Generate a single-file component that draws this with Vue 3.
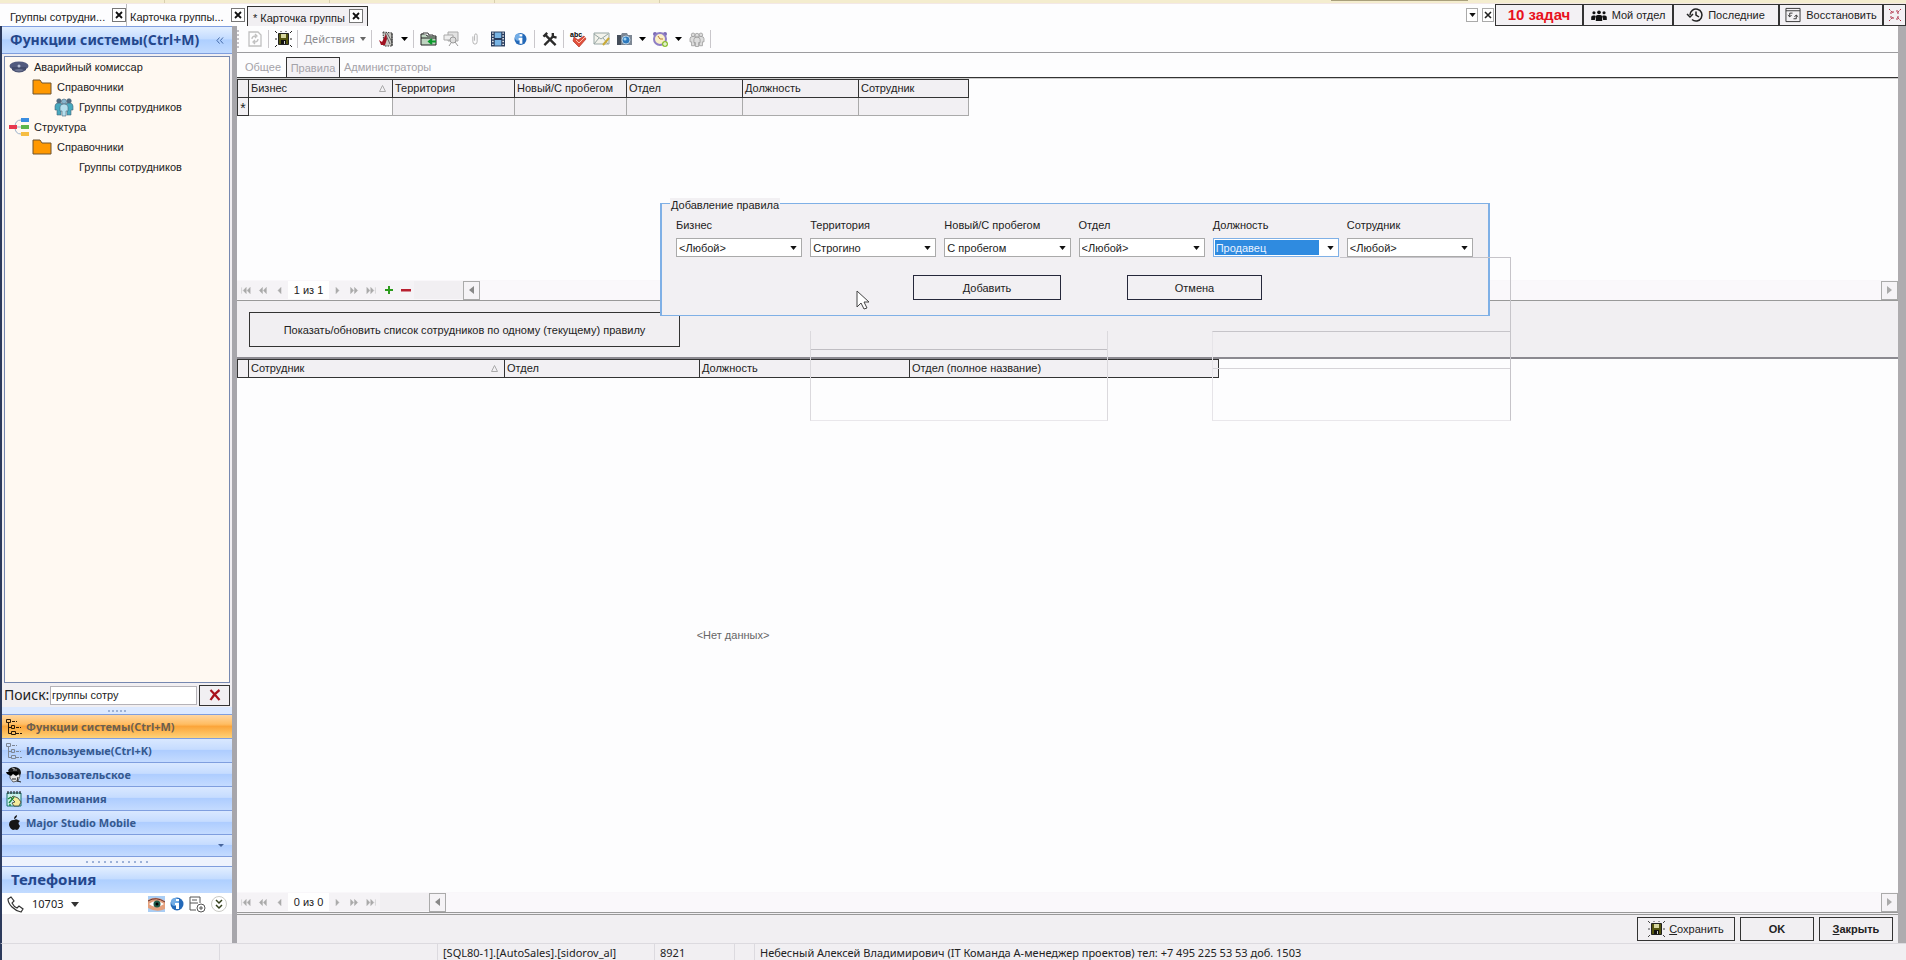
<script setup>
import { ref } from 'vue'

const docTabs = [
  { title: 'Группы сотрудни...', cls: 'first' },
  { title: 'Карточка группы...', cls: 'second' },
  { title: '* Карточка группы', cls: 'active' }
]
const navItems = [
  { label: 'Функции системы(Ctrl+M)', icon: 'tree', active: true },
  { label: 'Используемые(Ctrl+K)', icon: 'treeLight' },
  { label: 'Пользовательское', icon: 'face' },
  { label: 'Напоминания', icon: 'note' },
  { label: 'Major Studio Mobile', icon: 'apple' }
]
const ruleColumns = ['Бизнес', 'Территория', 'Новый/С пробегом', 'Отдел', 'Должность', 'Сотрудник']
const staffColumns = ['Сотрудник', 'Отдел', 'Должность', 'Отдел (полное название)']
const fields = [
  { id: 'business', label: 'Бизнес', value: '<Любой>' },
  { id: 'territory', label: 'Территория', value: 'Строгино' },
  { id: 'condition', label: 'Новый/С пробегом', value: 'С пробегом' },
  { id: 'department', label: 'Отдел', value: '<Любой>' },
  { id: 'position', label: 'Должность', value: 'Продавец', focused: true },
  { id: 'employee', label: 'Сотрудник', value: '<Любой>' }
]
const pagers = [
  { name: 'Первая', d: 'M2 3v8M8 3 4 7l4 4zM13 3 9 7l4 4z' },
  { name: 'Назад на страницу', d: 'M7 3 3 7l4 4zM12 3 8 7l4 4z' },
  { name: 'Назад', d: 'M9 3 5 7l4 4z' }
]
const pagersNext = [
  { name: 'Вперёд', d: 'M5 3 9 7l-4 4z' },
  { name: 'Вперёд на страницу', d: 'M2 3l4 4-4 4zM7 3l4 4-4 4z' },
  { name: 'Последняя', d: 'M1 3l4 4-4 4zM6 3l4 4-4 4zM12 3v8' }
]
const query = ref('группы сотру')
</script>

<template>
  <div class="app">
    <div class="topstrip"><i></i><i></i><i></i><i></i><b></b></div>

    <header class="tabrow">
      <div v-for="t in docTabs" :key="t.title" class="doctab" :class="t.cls">
        <span>{{ t.title }}</span>
        <button class="xbtn" aria-label="Закрыть вкладку">
          <svg width="8" height="8" viewBox="0 0 8 8"><path d="M1 1l6 6M7 1 1 7" stroke="#111" stroke-width="1.8" /></svg>
        </button>
      </div>
      <div class="spacer"></div>
      <button class="mini" aria-label="Список вкладок"><svg width="7" height="4" viewBox="0 0 8 5"><path d="M0 0h8L4 5z" fill="#111" /></svg></button>
      <button class="mini" aria-label="Закрыть"><svg width="8" height="8" viewBox="0 0 8 8"><path d="M1 1l6 6M7 1 1 7" stroke="#222" stroke-width="1.6" /></svg></button>
      <div class="topbuttons">
        <button class="tasks">10 задач</button>
        <button class="dept">
          <svg width="16" height="11" viewBox="0 0 17 12" fill="#111"><circle cx="3" cy="3" r="1.7" /><circle cx="8.500" cy="2.500" r="2" /><circle cx="14" cy="3" r="1.700" /><path d="M0 11V8q0-2 2-2h2q1 0 1 1-1 1-1 4zM17 11V8q0-2-2-2h-2q-1 0-1 1 1 1 1 4zM5 12V8q0-2.500 2-2.500h3q2 0 2 2.500v4z" /></svg>
          Мой отдел
        </button>
        <button class="recent">
          <svg width="16" height="16" viewBox="0 0 16 16" fill="none" stroke="#222" stroke-width="1.500"><path d="M3 8a6 6 0 1 1 2 4.500M0 7l3 3 3-3M9 4.500V8l3 2" /></svg>
          Последние
        </button>
        <button class="restore">
          <svg width="16" height="16" viewBox="0 0 17 16" fill="none" stroke="#333"><path d="M1 1h15v14H1zM1 3.500h15" /><path d="M8 6H5v4M3 8l2 2 2-2M9 12h3V8M10 10l2-2 2 2" /></svg>
          Восстановить
        </button>
        <button class="shrink" aria-label="Свернуть">
          <svg width="12" height="12" viewBox="0 0 12 12" fill="none" stroke="#b03048"><path d="M0 0l4 4M1 4h3V1M12 0 8 4M8 1v3h3M0 12l4-4M1 8h3v3M12 12 8 8M8 11V8h3" stroke-dasharray="2 1" /></svg>
        </button>
      </div>
    </header>

    <div class="body">
      <aside class="sidebar">
        <div class="sidehead"><h2>Функции системы(Ctrl+M)</h2><button aria-label="Свернуть панель">
          <svg width="8" height="7" viewBox="0 0 9 8" fill="none" stroke="#345a9c"><path d="M4 0.500 1 4l3 3.500M8 0.500 5 4l3 3.500" /></svg></button></div>
        <div class="tree">
          <div class="node">
            <svg width="20" height="14" viewBox="0 0 20 14"><ellipse cx="10" cy="6" rx="9.500" ry="4.500" fill="#525a7e" /><path d="M3 7h14v3q-7 5-14 0z" fill="#434b6c" /><path d="M5 10q5-2 10 0-5 3-10 0z" fill="#6c7492" /><circle cx="10" cy="6" r="1.500" fill="#b8c0d4" /></svg>
            Аварийный комиссар</div>
          <div class="node l1">
            <svg width="20" height="16" viewBox="0 0 20 16"><path d="M1 1h7l2 3h9v11H1z" fill="#ff9800" stroke="#6f5430" /></svg>
            Справочники</div>
          <div class="node l2">
            <svg width="18" height="18" viewBox="0 0 18 18"><g stroke="#47647a" stroke-width="0.600"><circle cx="4" cy="3" r="2.300" fill="#526b80" /><circle cx="14" cy="3" r="2.300" fill="#526b80" /><path d="M0 8q0-3 4-3t4 3v4H6v5H2v-5H0zM10 8q0-3 4-3t4 3v4h-2v5h-4v-5h-2z" fill="#48a9be" /><circle cx="9" cy="3.500" r="2.500" fill="#87b6ce" /><path d="M5 9q0-3 4-3t4 3v4h-2v5H7v-5H5z" fill="#b5dfed" /></g></svg>
            Группы сотрудников</div>
          <div class="node">
            <svg width="20" height="18" viewBox="0 0 20 18"><path d="M6 9h6M6 9q0-7 6-7M6 9q0 7 6 7" fill="none" stroke="#9db3cc" /><path fill="#e8384f" d="M0 7h8v4H0z" /><path fill="#3a8de0" d="M12 0h8v4h-8z" /><path fill="#5db54b" d="M12 7h8v4h-8z" /><path fill="#f6bd42" d="M12 14h8v4h-8z" /></svg>
            Структура</div>
          <div class="node l1">
            <svg width="20" height="16" viewBox="0 0 20 16"><path d="M1 1h7l2 3h9v11H1z" fill="#ff9800" stroke="#6f5430" /></svg>
            Справочники</div>
          <div class="node l3">Группы сотрудников</div>
        </div>
        <div class="search">
          <label for="search">Поиск:</label>
          <input id="search" v-model="query" type="text" />
          <button aria-label="Очистить"><svg width="12" height="12" viewBox="0 0 12 12"><path d="M1.500 1q4 4 9 10M10.500 1Q5 5 1.500 11" stroke="#a8101c" stroke-width="2.200" fill="none" /></svg></button>
        </div>
        <div class="split dots5"><i v-for="n in 5" :key="n"></i></div>
        <nav class="sidenav">
          <button v-for="n in navItems" :key="n.label" :class="{ active: n.active }">
            <svg width="16" height="16" viewBox="0 0 16 16">
              <g v-if="n.icon === 'tree' || n.icon === 'treeLight'" :stroke="n.icon === 'tree' ? '#2b1a08' : '#7d8695'" fill="none"><path d="M0.500 0.500h4v3h-4zM2.500 4v10.500H5M2.500 8.500H5M5.500 6.500h3v3h-3zM5.500 12.500h4v3h-4z" /><path d="M6 2.500h5M10 8.500h5M10 14.500h6" stroke-dasharray="3 1" /></g>
              <g v-else-if="n.icon === 'face'"><path d="M2 4q1-4 7-4 6 1 6 6l-1 3-3-3H4z" fill="#181818" /><path d="M4 6h8l2 3-2 5-5 1-3-4z" fill="#e4e4e4" stroke="#333" stroke-width="0.700" /><path d="M0 5h12l1 2-3 2-3-2-2 2-4-2z" fill="#000" /><path d="M6 1l3 1M7 3h4" stroke="#ddd" stroke-width="0.700" /><path d="M6 12h4M12 10l-1 4 4 1" stroke="#222" fill="none" /></g>
              <g v-else-if="n.icon === 'note'"><path d="M1 2h14v13H1z" fill="#c9f0ea" stroke="#19716d" /><path d="M2 0v3M5 0v3M8 0v3M11 0v3M14 0v3" stroke="#111" /><path d="M7 5l5 2 3 4-2 4H8l-2-3 3-1-4-4z" fill="#f4ec9c" stroke="#222" stroke-width="0.700" /><path d="M3 12 8 6M2 8l3-2M3 14h2" stroke="#1c8a40" stroke-width="1.500" /></g>
              <g v-else fill="#151515"><path d="M8 5q2-1.500 4 0l2 1q-3 2 0 5-1 3-3 4-2-1-4 0-3-1-4-5 0-5 5-5zM8 4q0-3 3-4 0 3-3 4z" /></g>
            </svg>
            {{ n.label }}
          </button>
          <div class="overflow"><svg width="6" height="3" viewBox="0 0 6 3"><path d="M0 0h6L3 3z" fill="#47659c" /></svg></div>
        </nav>
        <div class="split dots11"><i v-for="n in 11" :key="n"></i></div>
        <h2 class="phonehead">Телефония</h2>
        <div class="phonerow">
          <svg width="17" height="17" viewBox="0 0 17 17" fill="none" stroke="#333" stroke-width="1.200"><path d="M4 1 1 3q0 4 4 8t9 5l2-3-4-3-2 2q-3-1-5-5l2-2z" /></svg>
          <span>10703</span>
          <svg width="8" height="5" viewBox="0 0 8 5"><path d="M0 0h8L4 5z" fill="#333" /></svg>
          <div class="spacer"></div>
          <svg width="17" height="16" viewBox="0 0 17 16"><path fill="#a9cdf4" d="M0 0h17v16H0z" /><path d="M0 4q8-5 17 1v8q-8 4-17-1z" fill="#e4a07c" /><path d="M1 8q7-6 15 0-8 6-15 0z" fill="#fff" /><circle cx="9" cy="8" r="3.500" fill="#1f5a48" /><circle cx="9" cy="8" r="1.500" /><path d="M0 5q8-5 17 1" stroke="#633" fill="none" /></svg>
          <svg width="14" height="14" viewBox="0 0 14 14"><circle cx="7" cy="7" r="6.500" fill="#2469b8" /><circle cx="5" cy="5" r="4" fill="#73ade6" /><path d="M6 2h3v2H6zM5 6h4v6H6V8H5z" fill="#fff" /></svg>
          <svg width="17" height="17" viewBox="0 0 17 17" fill="none" stroke="#555"><path d="M11 7V1H1v13h6M3 4h5M1 7h8" /><circle cx="12" cy="12" r="4" /><path d="M10 12h4M12 10v4" /></svg>
          <svg width="16" height="16" viewBox="0 0 16 16" fill="none"><circle cx="8" cy="8" r="7.500" stroke="#c9c9c4" /><path d="M5 4l3 3 3-3M5 9l3 3 3-3" stroke="#34401c" stroke-width="1.500" /></svg>
        </div>
      </aside>

      <main class="main">
        <div class="toolbar">
          <span class="grip"></span>
          <button class="tb" aria-label="Обновить"><svg width="14" height="16" viewBox="0 0 14 16" fill="none" stroke="#c0c0c0"><path d="M1 1h9l3 3v11H1zM4 8q0-3 4-3M7 3l2 2-2 2M10 8q0 3-4 3M7 9l-2 2 2 2" stroke-width="1.300" /></svg></button>
          <span class="sep"></span>
          <button class="tb" aria-label="Сохранить"><svg width="17" height="16" viewBox="0 0 17 16"><path d="M0 0l2 2M6 0v1M11 0v1M17 0l-2 2M0 8h2M15 8h2M0 16l2-2M17 16l-2-2" stroke="#222" /><path d="M3.500 2.500h10v11h-10z" fill="#55550f" stroke="#222" /><path d="M6 3h5v4H6z" fill="#d7d7a0" /><path d="M6 9h5v4H6z" fill="#111" /><path d="M9 10h1v3H9z" fill="#ccc" /></svg></button>
          <span class="sep"></span>
          <button class="actions">Действия <svg width="6" height="4" viewBox="0 0 6 4"><path d="M0 0h6L3 4z" fill="#666" /></svg></button>
          <span class="sep"></span>
          <button class="tb" aria-label="Выход"><svg width="16" height="16" viewBox="0 0 16 16"><path d="M4 1l9 1v13H5z" fill="#c9c9c4" stroke="#333" stroke-dasharray="1.500 1" /><path d="M6 2l5 11M8 2l5 9" stroke="#666" /><path d="M13 2v13" stroke="#333" /><path d="M0 9l3 2 4-8 1 5-2 6H2z" fill="#a01020" /></svg></button>
          <button class="arr" aria-label="Выход: меню"><svg width="7" height="4" viewBox="0 0 7 4"><path d="M0 0h7L3.500 4z" /></svg></button>
          <span class="sep"></span>
          <button class="tb" aria-label="Папка"><svg width="17" height="14" viewBox="0 0 17 14"><path d="M1 2h5l1 2h9v9H1z" fill="#bed4c0" stroke="#222" /><path d="M3 2V1h5l1 2h4v1" fill="#fff" stroke="#333" /><path d="M1 6h15" fill="none" stroke="#222" /><path d="M16 9.500H9M12 7l-3 2.500 3 2.500" stroke="#0b9a2c" stroke-width="2" fill="none" /></svg></button>
          <button class="tb" aria-label="Просмотр"><svg width="17" height="16" viewBox="0 0 17 16"><path d="M5 1h10v9H5z" fill="#e2e2e2" stroke="#aaa" /><path d="M1 4h9v5H1z" fill="#eee" stroke="#aaa" /><circle cx="10" cy="9" r="3" fill="#ddd" stroke="#999" /><path d="M12 11l3 4M8 12l-2 3" stroke="#999" /></svg></button>
          <button class="tb" aria-label="Вложение"><svg width="6" height="12" viewBox="0 0 7 14" fill="none" stroke="#aaa"><path d="M1 4v6q0 3 2.500 3T6 10V3q0-2-1.500-2T3 3v6" /></svg></button>
          <button class="tb" aria-label="Видео"><svg width="14" height="16" viewBox="0 0 15 16"><path fill="#283c5e" d="M0 0h15v16H0z" /><path fill="#78b4e4" d="M4 1h7v6H4zM4 9h7v6H4z" /><path d="M2 1v15M13 1v15" stroke="#fff" stroke-width="1.500" stroke-dasharray="1.500 1.500" /></svg></button>
          <button class="tb" aria-label="Справка"><svg width="13" height="14" viewBox="0 0 14 14"><circle cx="7" cy="7" r="6.500" fill="#2469b8" /><circle cx="5" cy="5" r="4" fill="#73ade6" /><path d="M6 2h3v2H6zM5 6h4v6H6V8H5z" fill="#fff" /></svg></button>
          <span class="sep"></span>
          <button class="tb" aria-label="Инструменты"><svg width="16" height="15" viewBox="0 0 16 16" fill="none" stroke="#2b2b2b"><path d="M3 3l11 11" stroke-width="2.500" /><path d="M12 4 2 14" stroke-width="2.500" /><path d="M1 5l4-4M11 1v4l4 1" stroke-width="2.500" /></svg></button>
          <span class="sep"></span>
          <button class="tb" aria-label="Орфография"><svg width="17" height="16" viewBox="0 0 17 16"><path d="M4 6l4 3 6-4 2 3-7 8-6-6z" fill="#e0513d" stroke="#b63426" stroke-width="0.700" /><path d="M6 9l3 3 6-6" stroke="#ffc1ae" fill="none" /><text x="0" y="6" font-size="7" font-weight="700" font-family="Liberation Sans, sans-serif">abc</text></svg></button>
          <button class="tb" aria-label="Письмо"><svg width="17" height="14" viewBox="0 0 17 14"><path d="M1 1h15v11H1z" fill="#f3f3ec" stroke="#97a6a4" /><path d="M1 2l7 5 7-5M1 12l5-6M15 12l-5-6" stroke="#97a6a4" fill="none" /><path d="M10 13l6-7" stroke="#c9aa38" stroke-width="2" /></svg></button>
          <button class="tb" aria-label="Снимок"><svg width="17" height="14" viewBox="0 0 17 14"><path d="M1 3h4l1-2h5l1 2h4v10H1z" fill="#7d8794" /><path d="M1 3h4v10H1z" fill="#454e5b" /><circle cx="10" cy="8" r="4" fill="#2d79bd" stroke="#b7d0e4" /><circle cx="9" cy="7" r="1.500" fill="#9cd3f5" /></svg></button>
          <button class="arr" aria-label="Снимок: меню"><svg width="7" height="4" viewBox="0 0 7 4"><path d="M0 0h7L3.500 4z" /></svg></button>
          <button class="tb" aria-label="Напоминание"><svg width="17" height="16" viewBox="0 0 17 16"><circle cx="3" cy="3" r="2" fill="#7a68b4" /><circle cx="13" cy="3" r="2" fill="#7a68b4" /><circle cx="8" cy="8" r="6" fill="#faf0c7" stroke="#8f7fc4" stroke-width="2" /><path d="M6 5l2 3h3" stroke="#bc7a35" fill="none" /><circle cx="13" cy="13" r="3" fill="#8cc034" /><path d="M11 13h4M13 11v4" stroke="#fff" /></svg></button>
          <button class="arr" aria-label="Напоминание: меню"><svg width="7" height="4" viewBox="0 0 7 4"><path d="M0 0h7L3.500 4z" /></svg></button>
          <button class="tb" aria-label="Группа"><svg width="14" height="15" viewBox="0 0 18 18"><g fill="#ddd" stroke="#999"><circle cx="4" cy="3" r="2.300" /><circle cx="14" cy="3" r="2.300" /><path d="M0 8q0-3 4-3t4 3v4H6v5H2v-5H0zM10 8q0-3 4-3t4 3v4h-2v5h-4v-5h-2z" /><circle cx="9" cy="3.500" r="2.500" /><path d="M5 9q0-3 4-3t4 3v4h-2v5H7v-5H5z" /></g></svg></button>
          <span class="sep"></span>
        </div>

        <div class="subtabs">
          <button>Общее</button>
          <button class="on">Правила</button>
          <button>Администраторы</button>
        </div>

        <section class="rules">
          <table class="grid rulesgrid">
            <colgroup><col class="ind" /><col class="r1" /><col class="r2" /><col class="r3" /><col class="r4" /><col class="r4" /><col class="r6" /></colgroup>
            <thead><tr><th></th><th v-for="(c, i) in ruleColumns" :key="c">{{ c }}<svg v-if="i === 0" class="sort" width="7" height="7" viewBox="0 0 7 7"><path d="M3.500 0.500 0.500 6.500h6z" fill="none" stroke="#aaa" /></svg></th></tr></thead>
            <tbody><tr><td class="mark">*</td><td class="edit"></td><td v-for="n in 5" :key="n"></td></tr></tbody>
          </table>
          <div class="spacer"></div>
          <div class="pager">
            <button v-for="p in pagers" :key="p.name" :aria-label="p.name"><svg width="11" height="11" viewBox="0 0 14 14"><path :d="p.d" fill="#aaa" stroke="#aaa" stroke-width="0.500" /></svg></button>
            <span class="count">1 из 1</span>
            <button v-for="p in pagersNext" :key="p.name" :aria-label="p.name"><svg width="11" height="11" viewBox="0 0 14 14"><path :d="p.d" fill="#aaa" stroke="#aaa" stroke-width="0.500" /></svg></button>
            <button aria-label="Добавить строку"><svg width="8" height="8" viewBox="0 0 9 9"><path d="M0 4.500h9M4.500 0v9" stroke="#2b9b1c" stroke-width="2.200" /></svg></button>
            <button aria-label="Удалить строку"><svg width="10" height="3" viewBox="0 0 10 3"><path d="M0 0h10v2.500H0z" fill="#b82030" /></svg></button>
            <span class="fill"></span>
            <button class="scroll" aria-label="Прокрутить влево"><svg width="5" height="8" viewBox="0 0 5 8"><path d="M5 0v8L0 4z" fill="#888" /></svg></button>
            <span class="track"></span>
            <button class="scroll" aria-label="Прокрутить вправо"><svg width="5" height="8" viewBox="0 0 5 8"><path d="M0 0v8l5-4z" fill="#aaa" /></svg></button>
          </div>
        </section>

        <section class="showbar"><button>Показать/обновить список сотрудников по одному (текущему) правилу</button></section>

        <section class="staff">
          <table class="grid staffgrid">
            <colgroup><col class="ind" /><col class="s1" /><col class="s2" /><col class="s3" /><col class="s4" /></colgroup>
            <thead><tr><th></th><th v-for="(c, i) in staffColumns" :key="c">{{ c }}<svg v-if="i === 0" class="sort" width="7" height="7" viewBox="0 0 7 7"><path d="M3.500 0.500 0.500 6.500h6z" fill="none" stroke="#aaa" /></svg></th></tr></thead>
          </table>
          <div class="empty">&lt;Нет данных&gt;</div>
          <div class="pager">
            <button v-for="p in pagers" :key="p.name" :aria-label="p.name"><svg width="11" height="11" viewBox="0 0 14 14"><path :d="p.d" fill="#aaa" stroke="#aaa" stroke-width="0.500" /></svg></button>
            <span class="count">0 из 0</span>
            <button v-for="p in pagersNext" :key="p.name" :aria-label="p.name"><svg width="11" height="11" viewBox="0 0 14 14"><path :d="p.d" fill="#aaa" stroke="#aaa" stroke-width="0.500" /></svg></button>
            <span class="fill"></span>
            <button class="scroll" aria-label="Прокрутить влево"><svg width="5" height="8" viewBox="0 0 5 8"><path d="M5 0v8L0 4z" fill="#888" /></svg></button>
            <span class="track"></span>
            <button class="scroll" aria-label="Прокрутить вправо"><svg width="5" height="8" viewBox="0 0 5 8"><path d="M0 0v8l5-4z" fill="#aaa" /></svg></button>
          </div>
        </section>

        <footer class="actionsbar">
          <button class="save"><svg width="17" height="16" viewBox="0 0 17 16"><path d="M0 0l2 2M6 0v1M11 0v1M17 0l-2 2M0 8h2M15 8h2M0 16l2-2M17 16l-2-2" stroke="#444" /><path d="M3.500 2.500h10v11h-10z" fill="#55550f" stroke="#222" /><path d="M6 3h5v4H6z" fill="#d7d7a0" /><path d="M6 9h5v4H6z" fill="#111" /><path d="M9 10h1v3H9z" fill="#ccc" /></svg><span><u>С</u>охранить</span></button>
          <button class="bold">OK</button>
          <button class="bold"><span><u>З</u>акрыть</span></button>
        </footer>

        <div class="ghost g1"></div>
        <div class="ghost g2"></div>

        <form class="dialog" @submit.prevent>
          <div class="legend">Добавление правила</div>
          <div class="fields">
            <div v-for="f in fields" :key="f.id" class="field" :class="{ focused: f.focused }">
              <label :for="f.id">{{ f.label }}</label>
              <div class="combo">
                <select :id="f.id"><option>{{ f.value }}</option></select>
                <svg width="7" height="4" viewBox="0 0 8 5"><path d="M0 0h8L4 5z" fill="#111" /></svg>
              </div>
            </div>
          </div>
          <div class="dlgbuttons"><button class="add">Добавить</button><button class="cancel">Отмена</button></div>
        </form>
        <div class="ghost g3"></div>
        <svg class="cursor" width="14" height="20" viewBox="0 0 14 20"><path d="M1 1v16l4-4 3 6 3-1-3-6h5z" fill="#fff" stroke="#444" /></svg>
      </main>
      <div class="edge"></div>
    </div>

    <div class="status">
      <span class="c1"></span><span class="c1"></span><span class="c3">[SQL80-1].[AutoSales].[sidorov_al]</span><span class="c4">8921</span><span class="c5"></span><span class="c6">Небесный Алексей Владимирович (IT Команда А-менеджер проектов) тел: +7 495 225 53 53 доб. 1503</span>
    </div>
  </div>
</template>

<style>
body { margin: 0; background: #fdfdfe; }
</style>

<style scoped>
.app { height: 100vh; min-height: 700px; display: flex; flex-direction: column; overflow: hidden; font: 11px/14px "Liberation Sans", Arial, sans-serif; color: #222; background: #fdfdfe; }
.app * { box-sizing: border-box; }
button { font: inherit; color: inherit; background: none; border: 0; padding: 0; margin: 0; display: flex; align-items: center; justify-content: center; white-space: nowrap; }
svg { flex: none; display: block; overflow: visible; }
.spacer { flex: 1; }
.topstrip { height: 4px; flex: none; display: flex; background: #f4edcf; border-bottom: 1px solid #f3e8e6; }
.topstrip i { width: 165px; border-right: 1px solid #d8cfae; }
.topstrip b { width: 137px; height: 1px; background: #a9a07c; margin-left: 671px; }

.tabrow { height: 22px; flex: none; display: flex; align-items: stretch; }
.doctab { display: flex; align-items: center; justify-content: space-between; white-space: nowrap; }
.doctab span { padding-top: 4px; }
.doctab.first { width: 127px; padding-left: 10px; border-right: 1px solid #bbb; }
.doctab.second { width: 120px; padding: 0 2px 0 3px; }
.doctab.active { width: 121px; margin-top: 2px; padding: 0 4px 0 5px; background: #f1eff2; border: 1px solid #333; border-bottom: 0; }
.doctab.active span { padding-top: 2px; }
.xbtn { width: 14px; height: 14px; border: 1px solid #777; background: #fff; }
.doctab.active .xbtn { margin-bottom: 1px; }
.mini { width: 12px; height: 14px; margin: 4px 4px 0 0; border: 1px solid #aaa; background: #fff; }
.mini + .topbuttons { margin-left: -3px; }
.topbuttons { display: flex; }
.topbuttons button { border: 1px solid #333; background: #f3f1f4; gap: 5px; }
.topbuttons .tasks { width: 88px; color: #e8121c; font-size: 15px; font-weight: 700; }
.topbuttons .dept { width: 90px; }
.topbuttons .recent { width: 106px; }
.topbuttons .restore { width: 104px; }
.topbuttons .shrink { width: 23px; }

.body { flex: 1; min-height: 0; display: flex; }
.edge { width: 8px; flex: none; background: #aeacaf; }

.sidebar { width: 237px; flex: none; display: flex; flex-direction: column; border-left: 2px solid #2c3a5c; border-right: 5px solid #a7a6ab; background: #f1eff2; }
.sidehead { height: 28px; flex: none; display: flex; align-items: center; justify-content: space-between; padding: 0 8px; background: linear-gradient(#e3efff, #c4dcff 45%, #aecfff 50%, #c2dbff); border: 1px solid #7f9ede; border-width: 1px 0; }
h2 { margin: 0; font: 700 14px/20px "Noto Sans", sans-serif; color: #24478c; white-space: nowrap; }
.tree { flex: 1; min-height: 0; margin: 2px 2px 0 2px; border: 1px solid #7688b0; background: #fff9f2; }
.node { height: 20px; display: flex; align-items: center; gap: 5px; padding-left: 4px; white-space: nowrap; }
.node.l1 { padding-left: 27px; }
.node.l2 { padding-left: 50px; gap: 6px; }
.node.l3 { padding-left: 74px; }
.search { height: 24px; flex: none; display: flex; align-items: center; padding: 0 2px; gap: 2px; }
.search label { width: 44px; font: 14px/20px "Noto Sans", sans-serif; }
.search input { flex: 1; min-width: 0; height: 19px; border: 1px solid #b5b3b8; background: #fff; font: inherit; color: #222; padding: 0 1px; }
.search button { width: 31px; height: 21px; border: 1px solid #333; }
.split { flex: none; height: 8px; display: flex; justify-content: center; align-items: center; gap: 2px; background: #dce9ff; }
.split i { width: 2px; height: 2px; background: #9db2d8; }
.dots11 { height: 9px; gap: 4px; background: #eef3fd; }
.dots5 { border-bottom: 1px solid #7f9ede; }
.sidenav { flex: none; }
.sidenav button, .overflow { width: 100%; height: 24px; border-bottom: 1px solid #7f9ede; background: linear-gradient(#d9e8ff, #c6dcff 45%, #aecdff 50%, #c4dbff); }
.sidenav button { justify-content: flex-start; padding-left: 4px; gap: 4px; font: 700 11px/16px "Noto Sans", sans-serif; color: #35598f; }
.sidenav button.active { background: linear-gradient(#ffd6a0, #ffbd62 40%, #fba53a 50%, #ffd278); color: #6c6050; }
.sidenav .overflow { height: 22px; display: flex; align-items: center; justify-content: flex-end; padding-right: 8px; }
.phonehead { height: 27px; flex: none; font-size: 15px; line-height: 25px; padding-left: 9px; background: linear-gradient(#e3efff, #c4dcff 45%, #aecfff 50%, #c2dbff); border-top: 1px solid #7f9ede; }
.phonerow { height: 21px; flex: none; margin-bottom: 29px; padding: 1px 5px 0 5px; display: flex; align-items: center; gap: 5px; background: #fff; font: 11px/16px "Noto Sans", sans-serif; }
.phonerow span { padding: 0 3px; }

.main { flex: 1; min-width: 0; position: relative; display: flex; flex-direction: column; }
.toolbar { height: 27px; flex: none; display: flex; align-items: center; border-bottom: 1px solid #9c9c9f; }
.grip { width: 6px; height: 18px; border-left: 2px dotted #c5c3c8; }
.tb { width: 23px; height: 20px; }
.arr { width: 13px; height: 20px; }
.sep { width: 6px; height: 18px; background: linear-gradient(90deg, transparent 2px, #c9c7cb 2px, #c9c7cb 3px, transparent 3px); }
.actions { width: 68px; gap: 5px; font: 11px/16px "Noto Sans", sans-serif; color: #8c8c90; }
.subtabs { height: 25px; flex: none; display: flex; align-items: flex-end; padding-left: 8px; border-bottom: 1px solid #333; color: #a4a2a8; }
.subtabs button { height: 20px; }
.subtabs button:first-child { width: 41px; justify-content: flex-start; }
.subtabs .on { width: 54px; border: 1px solid #333; border-bottom: 0; background: #f3f1f4; }
.subtabs button:last-child { padding-left: 4px; }

.rules { flex: 0 0 222px; display: flex; flex-direction: column; border-top: 1px solid #ccc; }
.grid { table-layout: fixed; border-collapse: collapse; }
.rulesgrid { width: 731px; }
.staffgrid { width: 981px; }
.ind { width: 11px; } .r1 { width: 144px; } .r2 { width: 122px; } .r3 { width: 112px; } .r4 { width: 116px; } .r6 { width: 110px; }
.s1 { width: 256px; } .s2 { width: 195px; } .s3 { width: 210px; } .s4 { width: 309px; }
.grid th { height: 18px; padding: 0 2px; border: 1px solid #333; background: #f2f0f3; font-weight: 400; text-align: left; line-height: 15px; white-space: nowrap; }
.grid .sort { float: right; margin: 4px 4px 0 0; }
.grid td { height: 18px; padding: 0; background: #f2f0f3; border: 1px solid #aaa; }
.grid td.mark { border: 1px solid #333; text-align: center; font-size: 14px; line-height: 12px; padding-top: 3px; overflow: hidden; }
.grid td.edit { background: #fff; }
.pager { height: 20px; flex: none; display: flex; align-items: center; background: #f9f7fa; }
.pager button { width: 17px; height: 18px; background: #f5f3f6; }
.pager .count { width: 41px; text-align: center; background: #fff; line-height: 18px; }
.pager .fill { width: 49px; height: 18px; background: #f1eff2; }
.pager .scroll { width: 17px; height: 19px; border: 1px solid #aaa; }
.pager .track { flex: 1; height: 19px; background: #faf8fb; }
.showbar { height: 57px; flex: none; display: flex; align-items: center; padding: 1px 0 0 12px; border-top: 1px solid #999; background: #f1eff2; }
.showbar button { width: 431px; height: 35px; border: 1px solid #333; }
.staff { flex: 1; min-height: 0; display: flex; flex-direction: column; border-top: 2px solid #8b8990; }
.empty { flex: 1; width: 992px; display: flex; align-items: center; justify-content: center; color: #666; }
.actionsbar { height: 31px; flex: none; display: flex; justify-content: flex-end; gap: 5px; padding: 2px 5px 2px 0; background: #f1eff2; border-top: 3px double #999; }
.actionsbar button { width: 74px; height: 24px; border: 1px solid #333; gap: 4px; }
.actionsbar .save { width: 98px; }
.bold { font-weight: 700; }

.dialog { position: absolute; left: 423px; top: 177px; width: 830px; height: 113px; background: #f2f0f3; border: 1px solid #7fb0e6; border-width: 1px 2px 1px 2px; }
.legend { position: absolute; left: 8px; top: -6px; padding: 0 1px; background: #f2f0f3; }
.fields { display: flex; gap: 8px; padding: 14px 15px 0 14px; }
.field { flex: 1; min-width: 0; }
.field label { display: block; height: 20px; line-height: 14px; }
.combo { display: grid; align-items: center; }
.combo select, .combo svg { grid-area: 1 / 1; }
.combo select { appearance: none; width: 100%; height: 19px; margin: 0; border: 1px solid #aaa; border-radius: 0; background: #fff; font: inherit; color: #222; padding: 0 18px 0 2px; }
.combo svg { justify-self: end; margin-right: 5px; pointer-events: none; }
.focused select { border-color: #7fb0e6; color: #e8f2ff; background: linear-gradient(#2f8be0, #2f8be0) 1px 1px / calc(100% - 20px) calc(100% - 2px) no-repeat #fff; }
.dlgbuttons { display: flex; gap: 66px; padding: 18px 0 0 251px; }
.dlgbuttons button { height: 25px; border: 1px solid #26283a; }
.add { width: 148px; }
.cancel { width: 135px; }

.ghost { position: absolute; pointer-events: none; border: 1px solid #dbd9dd; }
.g1 { left: 573px; top: 305px; width: 298px; height: 90px; border-top: 0; border-bottom-color: #e9e7eb; background: linear-gradient(#c0bec3, #c0bec3) 0 18px / 100% 1px no-repeat; }
.g2 { left: 975px; top: 305px; width: 299px; height: 90px; border-color: #c6c4c9; border-bottom-color: #e9e7eb; border-left-color: #e6e4e8; background: linear-gradient(#d6d4d8, #d6d4d8) 0 36px / 100% 1px no-repeat; }
.g3 { left: 1103px; top: 231px; width: 171px; height: 75px; border-width: 1px 1px 0 0; border-color: #c6c4c9; }
.cursor { position: absolute; left: 619px; top: 264px; }

.status { height: 17px; flex: none; display: flex; background: #f1eff2; border-left: 2px solid #2c3a5c; border-top: 1px solid #dcdadf; font: 11px/17px "Noto Sans", sans-serif; white-space: nowrap; }
.status span { border-right: 1px solid #dcdadf; padding-left: 5px; }
.c1 { width: 218px; } .c3 { width: 217px; } .c4 { width: 80px; } .c5 { width: 20px; } .status .c6 { flex: 1; border: 0; }
</style>
